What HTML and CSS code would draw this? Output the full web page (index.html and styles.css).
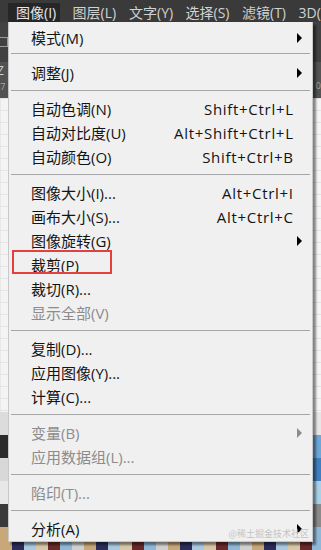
FILE: index.html
```html
<!DOCTYPE html>
<html lang="zh-CN">
<head>
<meta charset="utf-8">
<link rel="stylesheet" href="styles.css">
</head>
<body>
<div class="app">
  <div class="menubar">
    <span class="mb-item active">图像(I)</span>
    <span class="mb-item">图层(L)</span>
    <span class="mb-item">文字(Y)</span>
    <span class="mb-item">选择(S)</span>
    <span class="mb-item">滤镜(T)</span>
    <span class="mb-item">3D(D)</span>
  </div>
  <div class="options">
    <div class="opt-icon"></div>
  </div>
  <div class="tabs">
    <div class="tab-left">
      <span class="tab-z">Z</span>
      <span class="tab-num">97</span>
    </div>
    <span class="tab-end">0</span>
  </div>
  <div class="canvas">
    <div class="grid-area"></div>
    <div class="pixels">
      <div class="pix-row r1"></div>
      <div class="pix-row r2"></div>
      <div class="pix-row r3"></div>
      <div class="pix-row r4"></div>
      <div class="pix-row r5"></div>
      <div class="pix-row r6"></div>
    </div>
  </div>

  <div class="dropdown">
    <div class="item"><span class="label">模式(M)</span><span class="arrow"></span></div>
    <div class="sep first"></div>
    <div class="item"><span class="label">调整(J)</span><span class="arrow"></span></div>
    <div class="sep"></div>
    <div class="item"><span class="label">自动色调(N)</span><span class="key">Shift+Ctrl+L</span></div>
    <div class="item"><span class="label">自动对比度(U)</span><span class="key">Alt+Shift+Ctrl+L</span></div>
    <div class="item"><span class="label">自动颜色(O)</span><span class="key">Shift+Ctrl+B</span></div>
    <div class="sep"></div>
    <div class="item"><span class="label">图像大小(I)...</span><span class="key">Alt+Ctrl+I</span></div>
    <div class="item"><span class="label">画布大小(S)...</span><span class="key">Alt+Ctrl+C</span></div>
    <div class="item"><span class="label">图像旋转(G)</span><span class="arrow"></span></div>
    <div class="item marked"><span class="label">裁剪(P)</span><span class="mark"></span></div>
    <div class="item"><span class="label">裁切(R)...</span></div>
    <div class="item disabled"><span class="label">显示全部(V)</span></div>
    <div class="sep"></div>
    <div class="item"><span class="label">复制(D)...</span></div>
    <div class="item"><span class="label">应用图像(Y)...</span></div>
    <div class="item"><span class="label">计算(C)...</span></div>
    <div class="sep"></div>
    <div class="item disabled"><span class="label">变量(B)</span><span class="arrow"></span></div>
    <div class="item disabled"><span class="label">应用数据组(L)...</span></div>
    <div class="sep"></div>
    <div class="item disabled"><span class="label">陷印(T)...</span></div>
    <div class="sep"></div>
    <div class="item"><span class="label">分析(A)</span><span class="arrow"></span></div>
    <span class="watermark">@稀土掘金技术社区</span>
  </div>
</div>
</body>
</html>
```

FILE: styles.css
```css
* { box-sizing: border-box; }
html, body { margin: 0; padding: 0; }
body {
  width: 321px;
  height: 550px;
  overflow: hidden;
  background: #f3f3f3;
  font-family: "Open Sans", "Noto Sans CJK SC", sans-serif;
}
.app {
  position: relative;
  width: 321px;
  height: 550px;
  display: flex;
  flex-direction: column;
  overflow: hidden;
}
.menubar {
  height: 22px;
  background: #3a3a3a;
  display: flex;
  align-items: stretch;
  padding-left: 8px;
  overflow: hidden;
}
.mb-item {
  flex: 0 0 56.5px;
  color: #d2d2d2;
  font-size: 14px;
  line-height: 19px;
  padding: 0 0 0 8px;
  margin-top: 3px;
  white-space: nowrap;
  overflow: hidden;
}
.mb-item.active {
  flex: 0 0 52px;
  margin-right: 4.5px;
  background: #262626;
  color: #e8e8e8;
}
.options {
  height: 40px;
  background: #424242;
}
.opt-icon {
  width: 8px;
  height: 10px;
  margin-top: 15px;
  border: 1px solid #9a9a9a;
  border-left: none;
}
.tabs {
  height: 36px;
  background: #535353;
  display: flex;
  justify-content: space-between;
  align-items: flex-start;
  color: #bdbdbd;
}
.tab-left {
  display: flex;
  flex-direction: column;
  margin-left: -3px;
  padding-top: 3px;
  gap: 5px;
}
.tab-z { font-size: 12px; line-height: 12px; color: #cfcfcf; }
.tab-num { font-size: 9px; line-height: 9px; color: #a8a8a8; margin-left: -2px; }
.tab-end { margin-top: 19px; font-size: 9px; line-height: 10px; color: #a8a8a8; }
.canvas {
  flex: 1;
  display: flex;
  flex-direction: column;
  background: #f4f4f4;
}
.grid-area {
  height: 314px;
  background-color: #f4f4f4;
  background-image:
    linear-gradient(#e4e4e4 1px, transparent 1px),
    linear-gradient(90deg, #e8e8e8 1px, transparent 1px);
  background-size: 12px 12px;
}
.pixels {
  flex: 1;
  display: flex;
  flex-direction: column;
}
.pix-row { flex: 1; }
.r1 { background-image: repeating-linear-gradient(90deg, #dcdcdc 0 12px, #c9c9c9 12px 24px, #e6e6e6 24px 36px); }
.r2 { background-image: repeating-linear-gradient(90deg, #2a2a2a 0 12px, #4a4a4a 12px 24px, #6ea6d6 24px 36px, #3a3a3a 36px 48px); }
.r3 { background-image: repeating-linear-gradient(90deg, #d8d8d8 0 12px, #444 12px 24px, #3f7fc0 24px 36px, #9c9c9c 36px 48px); }
.r4 { background-image: repeating-linear-gradient(90deg, #e8e8e8 0 12px, #cfcfcf 12px 24px, #a8d0e6 24px 36px, #2f2f2f 36px 48px); }
.r5 { background-image: repeating-linear-gradient(90deg, #3a3a3a 0 12px, #d6d6d6 12px 24px, #8a8a8a 24px 36px, #b0b0b0 36px 48px); }
.r6 { background-image: repeating-linear-gradient(90deg, #c8a878 0 12px, #2c2c5c 12px 24px, #a9c9e1 24px 36px, #d9c8a8 36px 48px, #6a2a2a 48px 60px, #8fb8d8 60px 72px, #d0d0d0 72px 84px); }

.dropdown {
  position: absolute;
  left: 8px;
  top: 22px;
  width: 305px;
  height: 520px;
  background: #f0f0f0;
  border: 1px solid #c8c8c8;
  border-top: none;
  box-shadow: 3px 3px 2px rgba(0,0,0,0.45);
  padding-top: 4px;
  display: flex;
  flex-direction: column;
}
.item {
  position: relative;
  height: 24px;
  display: flex;
  align-items: center;
  justify-content: space-between;
  padding: 0 19px 0 22px;
  font-size: 15px;
  color: #141414;
  white-space: nowrap;
}
.item.disabled { color: #8c8c8c; }
.label { line-height: 24px; }
.key { line-height: 24px; letter-spacing: 0.7px; margin-right: -0.7px; }
.arrow {
  position: absolute;
  right: 10px;
  top: 7px;
  width: 0;
  height: 0;
  border-top: 5px solid transparent;
  border-bottom: 5px solid transparent;
  border-left: 5px solid #000;
}
.item.disabled .arrow { border-left-color: #8c8c8c; }
.sep {
  height: 12px;
  padding-top: 5px;
  margin: 0 2px;
}
.sep.first { padding-top: 3px; height: 11px; }
.sep::before {
  content: "";
  display: block;
  height: 1px;
  background: #a7a7a7;
}
.mark {
  position: absolute;
  left: 3px;
  top: -3px;
  width: 100px;
  height: 24px;
  border: 2px solid #e34040;
}
.watermark {
  position: absolute;
  right: 3px;
  bottom: 1px;
  font-size: 9px;
  color: #c4c4c4;
  font-family: "Noto Sans CJK SC", sans-serif;
}
```
